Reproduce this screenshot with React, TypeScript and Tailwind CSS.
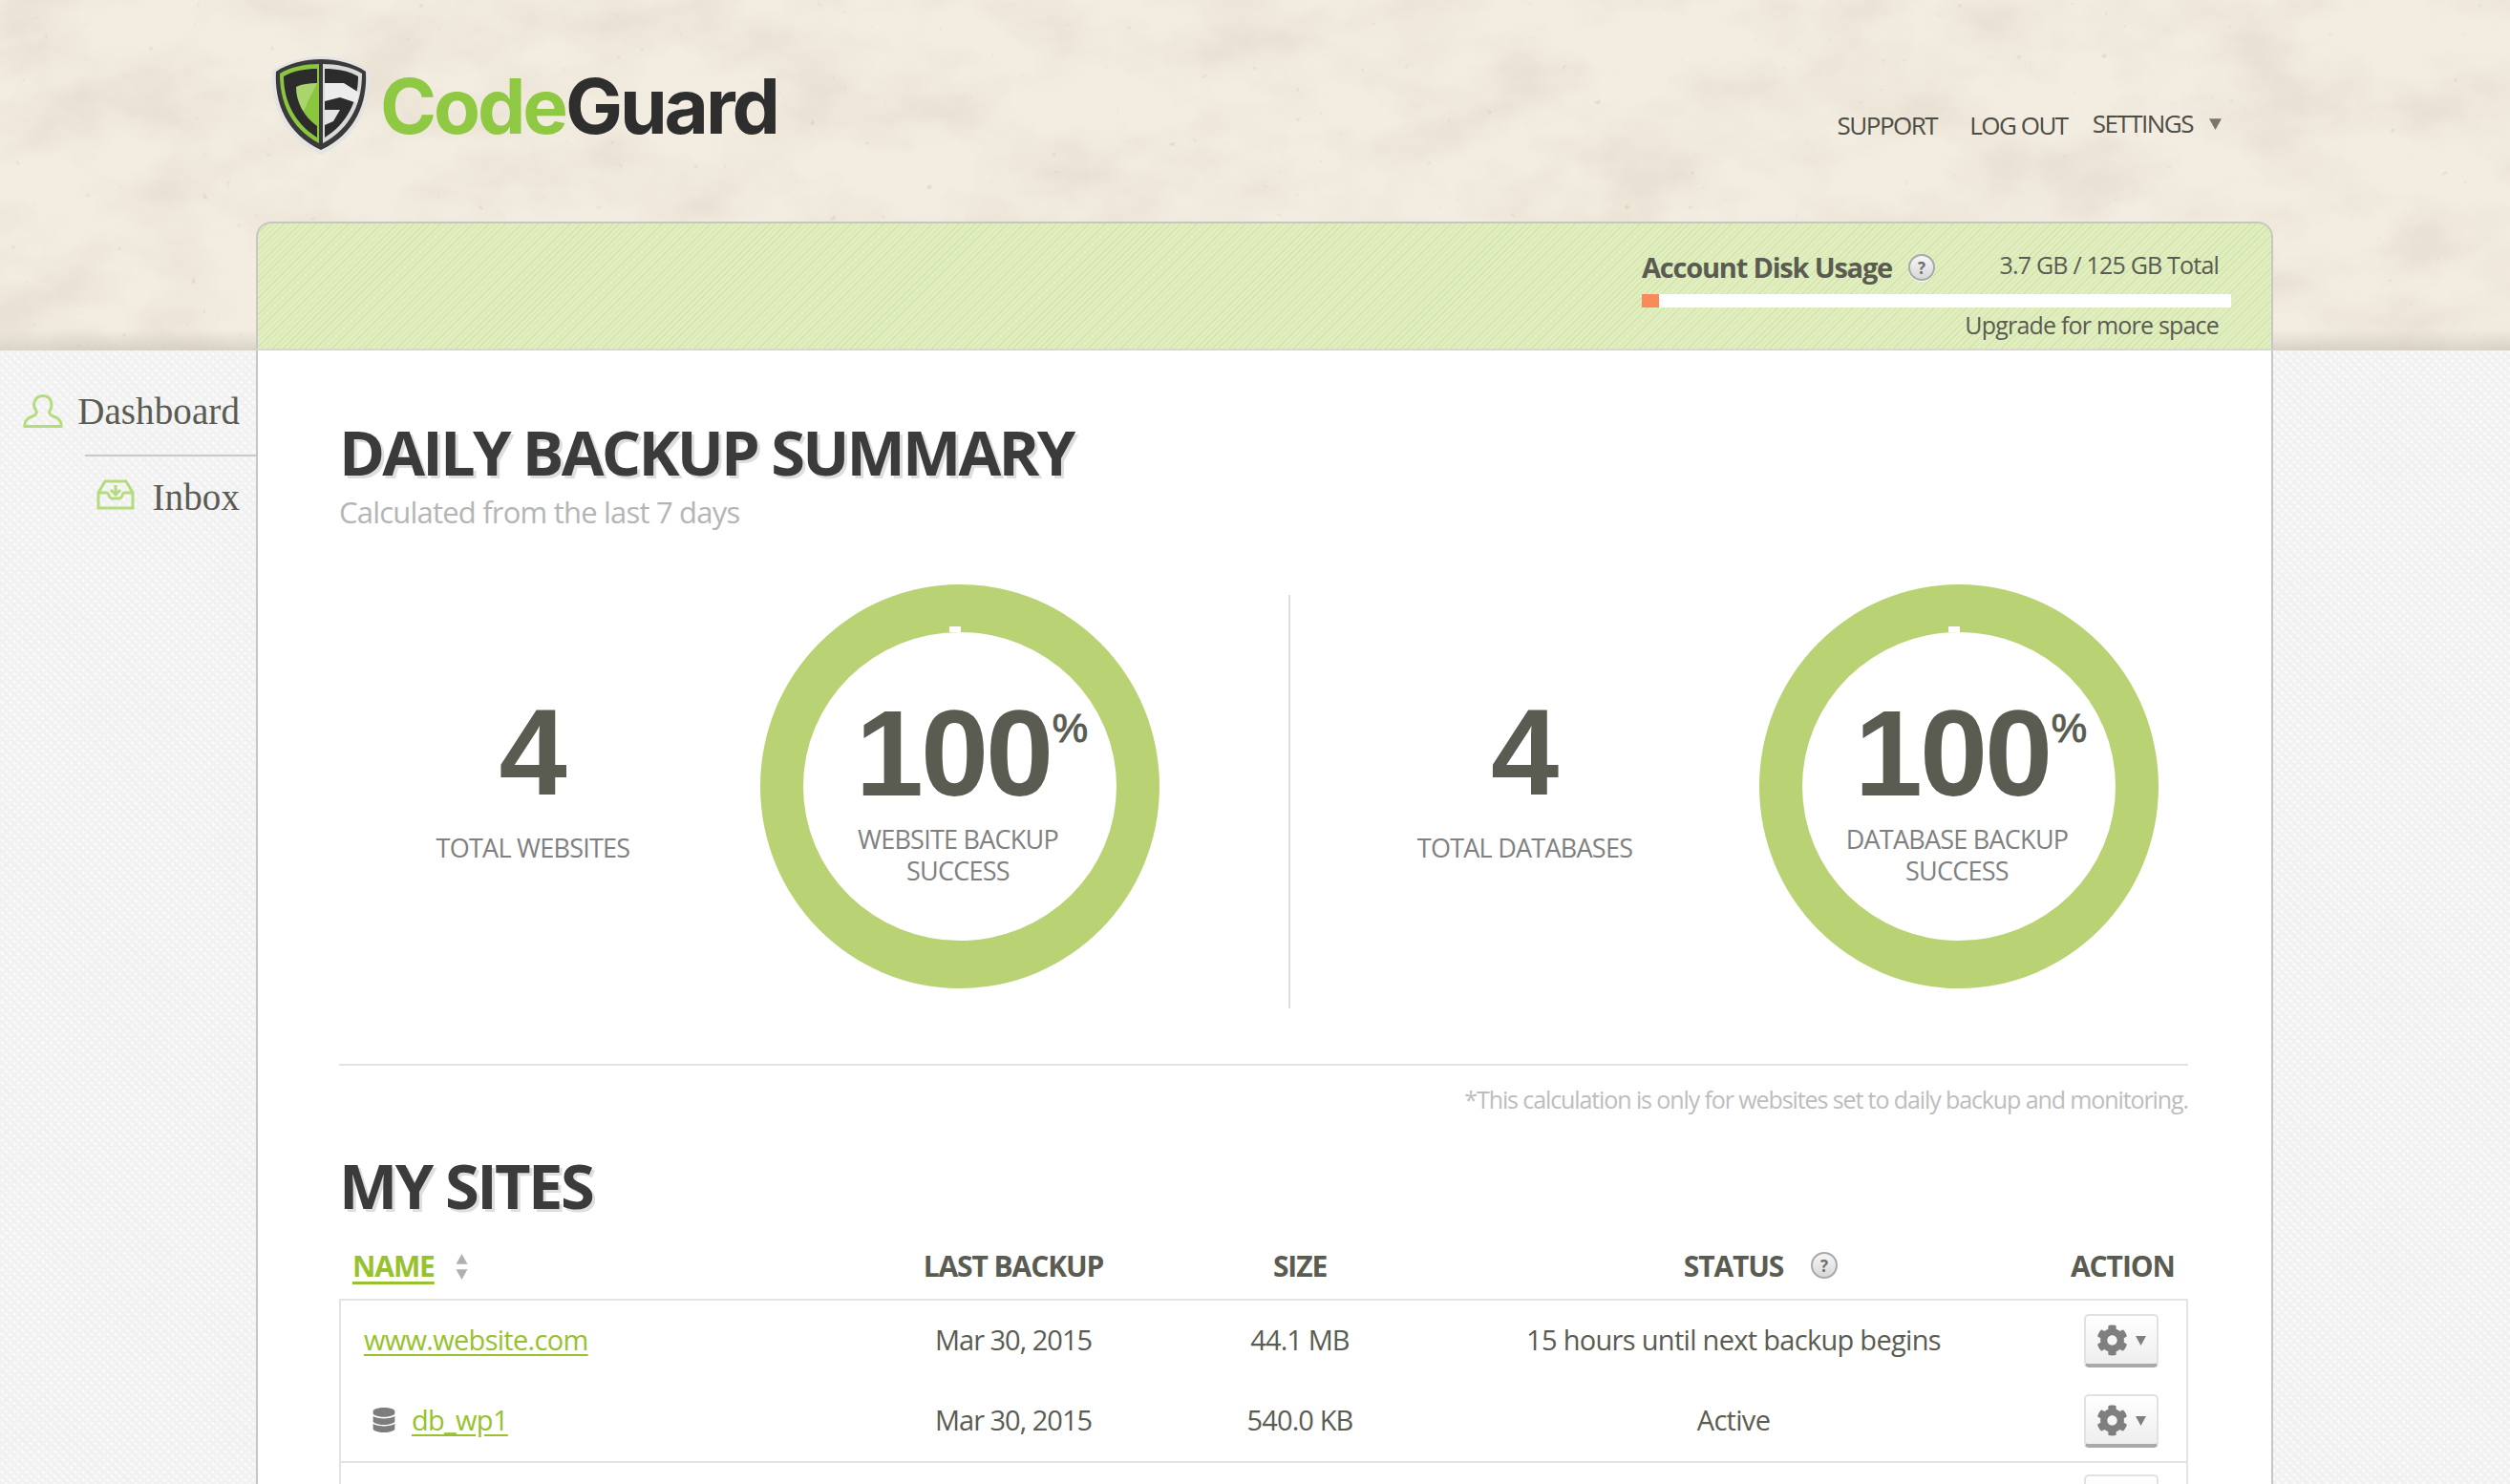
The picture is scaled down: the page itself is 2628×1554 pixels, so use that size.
import { FaCog, FaDatabase } from 'react-icons/fa'

const sans = "font-['Open_Sans','Liberation_Sans',sans-serif]"

function HelpIcon() {
  return (
    <span className="flex h-[28px] w-[28px] items-center justify-center rounded-full border-2 border-[#a9a9a9] bg-[linear-gradient(#f6f6f6,#d8d8d8)] text-[17px] font-bold leading-none text-[#6e6e6e] shadow-[0_1px_0_#fff]">
      ?
    </span>
  )
}

function Caret({ className }: { className: string }) {
  return (
    <svg viewBox="0 0 10 10" className={className} aria-hidden="true">
      <path d="M0 1h10L5 10z" fill="currentColor" />
    </svg>
  )
}

function Logo() {
  return (
    <div className="flex items-center">
      <svg viewBox="0 0 104 103" className="h-[103px] w-[104px]" aria-hidden="true">
        <defs>
          <linearGradient id="leaf" x1="0" y1="0" x2="1" y2="1">
            <stop offset="0.5" stopColor="#a9d46e" />
            <stop offset="0.5" stopColor="#8cc63f" />
          </linearGradient>
        </defs>
        <path d="M52 0C68 0 88 5 103 15C105 50 92 85 52 103C12 85-1 50 1 15C16 5 36 0 52 0Z" fill="#e4e4e4" />
        <path d="M52 3C68 3 86 7 99 16C101 49 88 81 52 98C16 81 3 49 5 16C18 7 36 3 52 3Z" fill="#3b3a3b" />
        <path d="M50 8C36 8 20 11 9 18C9 47 19 74 50 91Z" fill="#8cc63f" />
        <path d="M54 8C68 8 84 11 95 18C95 47 85 74 54 91Z" fill="#d9d9d9" />
        <path d="M48 13C36 13 23 15 13 21C13 46 24 70 48 85Z" fill="#2d2c2d" />
        <path d="M56 13C68 13 81 15 91 21C91 46 80 70 56 85Z" fill="#2d2c2d" />
        <path d="M48 28C40 28 32 29 26 32C26 48 34 63 48 73Z" fill="url(#leaf)" />
        <path d="M56 28L76 28L92 38L90 49L72 43L56 47Z" fill="#ececec" />
        <path d="M56 56L72 56L65 68L56 72Z" fill="#e4e4e4" />
      </svg>
      <span className="ml-[10px] font-['Inter',sans-serif] text-[80px] font-bold leading-none tracking-[-3.1px]">
        <span className="text-[#8fc842]">Code</span>
        <span className="text-[#2f2e2f]">Guard</span>
      </span>
    </div>
  )
}

function PaperTexture() {
  return (
    <svg className="absolute inset-0 h-full w-full" aria-hidden="true">
      <filter id="paper">
        <feTurbulence type="fractalNoise" baseFrequency="0.009 0.014" numOctaves="5" seed="11" />
        <feColorMatrix values="0 0 0 0 0.55  0 0 0 0 0.47  0 0 0 0 0.36  0.5 0 0 0 -0.19" />
      </filter>
      <filter id="specks">
        <feTurbulence type="fractalNoise" baseFrequency="0.09" numOctaves="2" seed="4" />
        <feColorMatrix values="0 0 0 0 0.5  0 0 0 0 0.42  0 0 0 0 0.3  9 0 0 0 -7" />
      </filter>
      <rect width="100%" height="100%" filter="url(#paper)" />
      <rect width="100%" height="100%" filter="url(#specks)" opacity="0.25" />
    </svg>
  )
}

function Ring({ label }: { label: string[] }) {
  return (
    <div className="relative flex h-[423px] w-[418px] shrink-0 flex-col items-center rounded-[50%] border-x-[45px] border-y-[50px] border-[#b9d374] bg-white">
      <div className="absolute left-[153px] top-[-6px] h-[6px] w-[12px] bg-white" />
      <div className="relative mr-[14px] mt-[60px] font-['Liberation_Sans',sans-serif] text-[128px] font-bold leading-[134px] tracking-[-3px] text-[#5a5c52]">
        100
        <span className="absolute left-[206px] top-[11px] text-[42px] font-normal leading-[60px] tracking-normal [-webkit-text-stroke:1px_#5a5c52]">%</span>
      </div>
      <div className={`${sans} mr-[4px] mt-[6px] text-center text-[27px] leading-[33px] tracking-[-0.75px] text-[#808080]`}>
        {label.map((line) => (
          <div key={line}>{line}</div>
        ))}
      </div>
    </div>
  )
}

function Count({ label, width }: { label: string; width: string }) {
  return (
    <div className={`${width} flex shrink-0 flex-col items-center pt-[109px]`}>
      <div className="font-['Liberation_Sans',sans-serif] text-[128px] font-bold leading-[134px] text-[#5a5c52]">4</div>
      <div className={`${sans} mt-[16px] text-[27px] leading-[34px] tracking-[-0.75px] text-[#808080]`}>{label}</div>
    </div>
  )
}

function GearButton() {
  return (
    <button className="flex h-[56px] w-[78px] items-center justify-center gap-[8px] rounded-[5px] border-2 border-b-4 border-[#e2e2e2] border-b-[#a9a9a9] bg-[linear-gradient(#ffffff,#eeeeee)] text-[#7f7f7f]">
      <FaCog className="h-[33px] w-[33px]" />
      <Caret className="h-[11px] w-[11px]" />
    </button>
  )
}

const rows = [
  { name: 'www.website.com', database: false, date: 'Mar 30, 2015', size: '44.1 MB', status: '15 hours until next backup begins' },
  { name: 'db_wp1', database: true, date: 'Mar 30, 2015', size: '540.0 KB', status: 'Active' },
]

export default function App() {
  return (
    <div className={`${sans} h-[1554px] w-full overflow-hidden bg-[#f9f9f9] text-[#5a5c52]`}>
      {/* paper header with the green band sitting on it */}
      <div className="relative h-[367px] bg-[#f3ede1] bg-[linear-gradient(to_bottom,transparent_345px,#d9d3c8_367px)]">
        <PaperTexture />
        <div className="relative flex h-[232px] w-[2380px] items-start justify-between pl-[284px] pr-[54px]">
          <div className="pt-[59px]">
            <Logo />
          </div>
          <nav className="flex pt-[111px] text-[26px] leading-[40px] tracking-[-1.5px] text-[#4d4d45]">
            <a className="mr-[34px]">SUPPORT</a>
            <a className="mr-[26px]">LOG OUT</a>
            <a className="-mt-[4px] flex items-center">
              SETTINGS
              <Caret className="ml-[17px] h-[13px] w-[13px] text-[#77776f]" />
            </a>
          </nav>
        </div>
        <div className="relative ml-[268px] flex h-[135px] w-[2112px] justify-end rounded-t-[16px] border-x-2 border-y-2 border-[#c6c6c6] border-b-[#d6d6d6] bg-[#dcebb9] bg-[repeating-linear-gradient(135deg,#e0eec0_0,#e0eec0_3px,#d2e4aa_3px,#d2e4aa_4px)] pr-[42px] pt-[28px]">
          <div className="w-[617px]">
            <div className="flex h-[36px] items-center justify-between pr-[13px]">
              <div className="flex items-center gap-[17px]">
                <span className="text-[29px] font-bold tracking-[-1.2px]">Account Disk Usage</span>
                <HelpIcon />
              </div>
              <span className="-mt-[5px] text-[25px] tracking-[-0.8px]">3.7 GB / 125 GB Total</span>
            </div>
            <div className="mt-[10px] h-[14px] bg-white">
              <div className="h-full w-[18px] bg-[#fb8a5a]" />
            </div>
            <div className="mt-[3px] pr-[13px] text-right text-[25px] leading-[30px] tracking-[-0.8px]">Upgrade for more space</div>
          </div>
        </div>
      </div>

      <div className="flex">
        <aside className="h-[1187px] w-[268px] shrink-0 bg-[repeating-linear-gradient(45deg,#f1f1f1_0,#f1f1f1_3px,transparent_3px,transparent_6px),repeating-linear-gradient(-45deg,#f3f3f3_0,#f3f3f3_3px,transparent_3px,transparent_6px)] pr-[17px] font-['Liberation_Serif',serif] text-[39px] leading-[50px] tracking-[0.1px] text-[#5a5c52]">
          <div className="mt-[39px] flex items-center justify-end gap-[15px]">
            <svg viewBox="0 0 42 37" className="-mt-[4px] h-[37px] w-[42px]" fill="none" stroke="#b5dc7c" strokeWidth="3" aria-hidden="true">
              <path d="M2 35.5h38c1-6-3-9-9-11-4-1.500-4-4-2-7 2-4 1-14-8-14S10 13.500 13 17.500c2 3 1.500 5.500-2 7-6 2-10 5-9 11Z" />
            </svg>
            <span>Dashboard</span>
          </div>
          <div className="ml-[89px] mt-[20px] h-[2px] w-[179px] bg-[#c9c9c9]" />
          <div className="mt-[18px] flex items-center justify-end gap-[19px]">
            <svg viewBox="0 0 40 32" className="-mt-[6px] h-[32px] w-[40px]" fill="none" stroke="#b5dc7c" strokeWidth="3" aria-hidden="true">
              <path d="M9 2h22l7 12v16H2V14ZM2 14h9c2 0 2 6 5 6h8c3 0 3-6 5-6h9" />
              <path d="M20 6v9M15 11l5 5 5-5" />
            </svg>
            <span>Inbox</span>
          </div>
        </aside>

        <main className="h-[1187px] w-[2112px] shrink-0 border-x-2 border-[#c6c6c6] bg-white pl-[85px] pr-[87px] pt-[71px]">
          <h1 className="text-[65px] font-bold leading-[70px] tracking-[-2.8px] text-[#3b3b3b] [text-shadow:3px_3px_0_#dedede]">DAILY BACKUP SUMMARY</h1>
          <p className="mt-[8px] text-[31px] leading-[40px] tracking-[-0.8px] text-[#b5b5b5]">Calculated from the last 7 days</p>

          <section className="mt-[56px] flex h-[444px] w-[1936px]">
            <Count label="TOTAL WEBSITES" width="w-[406px]" />
            <div className="ml-[35px]">
              <Ring label={['WEBSITE BACKUP', 'SUCCESS']} />
            </div>
            <div className="ml-[135px] mt-[11px] h-[433px] w-[2px] bg-[#dedede]" />
            <Count label="TOTAL DATABASES" width="w-[491px]" />
            <Ring label={['DATABASE BACKUP', 'SUCCESS']} />
          </section>

          <div className="mt-[58px] h-[2px] w-[1936px] bg-[#e3e3e3]" />
          <p className="mt-[20px] w-[1936px] text-right text-[25px] leading-[30px] tracking-[-1.1px] text-[#bdbdbd]">*This calculation is only for websites set to daily backup and monitoring.</p>

          <h2 className="mt-[45px] text-[65px] font-bold leading-[60px] tracking-[-2.6px] text-[#3b3b3b] [text-shadow:3px_3px_0_#dedede]">MY SITES</h2>

          <div className="mt-[35px] grid w-[1936px] grid-cols-[495px_422px_178px_730px_111px] items-center text-[30px] font-bold leading-[40px] tracking-[-1.1px]">
            <div className="flex items-center pl-[14px]">
              <a className="text-[#97c12e] underline underline-offset-[5px]">NAME</a>
              <span className="ml-[22px] flex flex-col gap-[3px] text-[#b0b0b0]">
                <Caret className="h-[12px] w-[13px] rotate-180" />
                <Caret className="h-[12px] w-[13px]" />
              </span>
            </div>
            <div className="text-center">LAST BACKUP</div>
            <div className="text-center">SIZE</div>
            <div className="relative text-center">
              STATUS
              <span className="absolute left-[446px] top-[5px] tracking-normal"><HelpIcon /></span>
            </div>
            <div className="-ml-[12px] whitespace-nowrap">ACTION</div>
          </div>

          <div className="mt-[14px] w-[1936px] border-x-2 border-t-2 border-[#e3e3e3] text-[29px] tracking-[-0.7px]">
            <div className="border-b-2 border-[#e3e3e3]">
              {rows.map((row) => (
                <div key={row.name} className="grid h-[84px] grid-cols-[493px_422px_178px_730px_111px] items-center">
                  <div className="flex items-center pb-[3px] pl-[24px] text-[#97c12e]">
                    {row.database ? (
                      <>
                        <FaDatabase className="ml-[8px] mr-[16px] h-[26px] w-[26px] text-[#7d7d7d]" />
                        <a className="underline underline-offset-[4px]">{row.name}</a>
                      </>
                    ) : (
                      <a className="underline underline-offset-[4px]">{row.name}</a>
                    )}
                  </div>
                  <div className="pb-[3px] text-center tracking-[-1px]">{row.date}</div>
                  <div className="pb-[3px] text-center tracking-[-0.9px]">{row.size}</div>
                  <div className="pb-[3px] text-center">{row.status}</div>
                  <div className="pl-[2px]"><GearButton /></div>
                </div>
              ))}
            </div>
            <div className="grid grid-cols-[493px_422px_178px_730px_111px] pt-[12px]">
              <div className="col-start-5 pl-[2px]"><GearButton /></div>
            </div>
          </div>
        </main>
        <div className="h-[1187px] flex-1 bg-[repeating-linear-gradient(45deg,#f1f1f1_0,#f1f1f1_3px,transparent_3px,transparent_6px),repeating-linear-gradient(-45deg,#f3f3f3_0,#f3f3f3_3px,transparent_3px,transparent_6px)]" />
      </div>
    </div>
  )
}
